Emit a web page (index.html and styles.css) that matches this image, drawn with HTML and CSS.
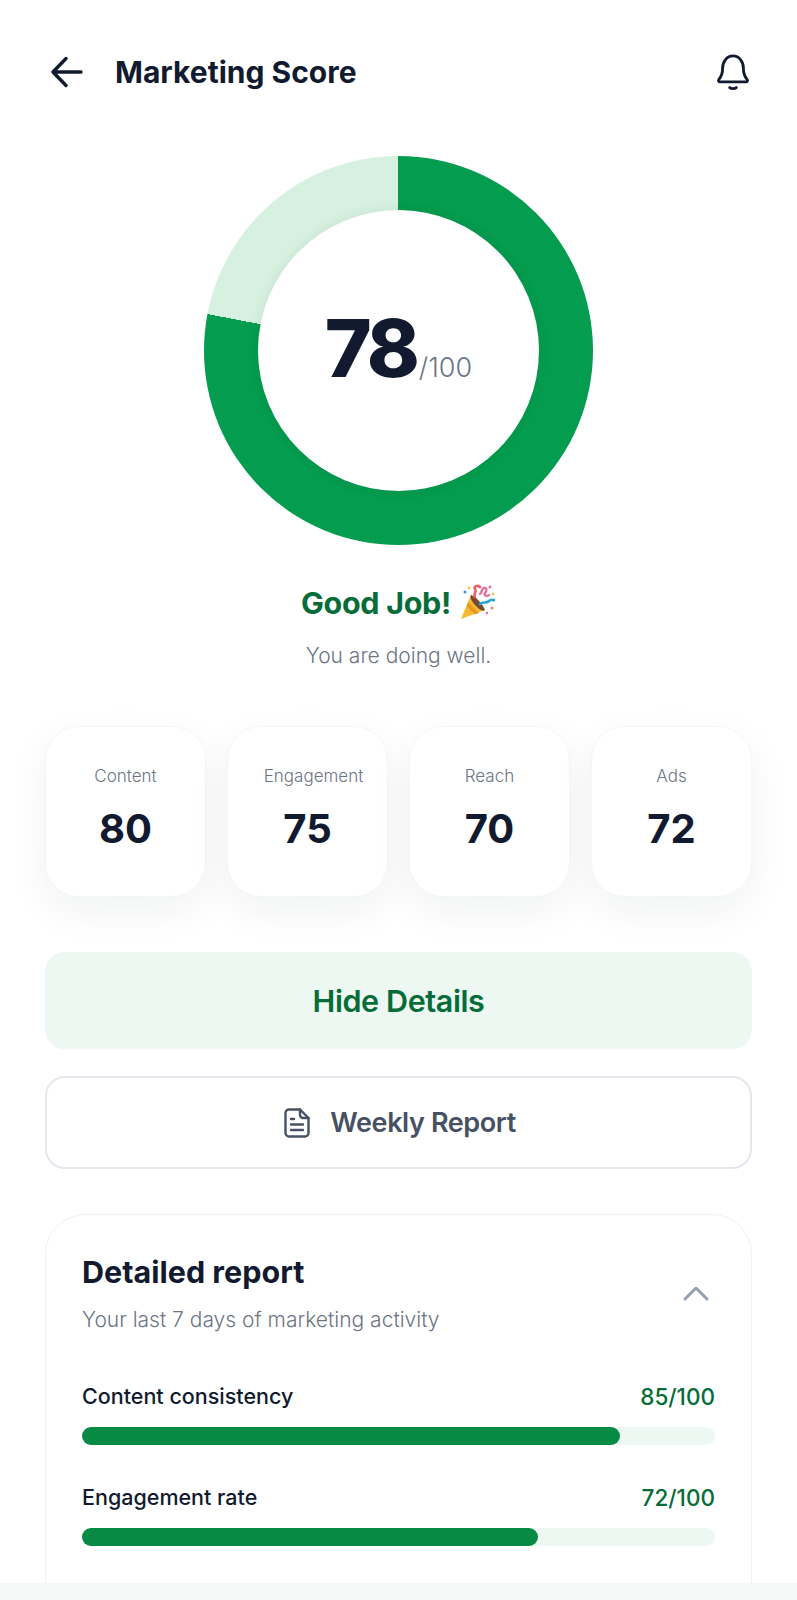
FILE: index.html
```html
<!DOCTYPE html>
<html lang="en">
<head>
    <meta charset="UTF-8">
    <meta name="viewport" content="width=device-width, initial-scale=1.0">
    <title>Marketing Score</title>
    <link rel="stylesheet" href="styles.css">
</head>
<body>
    <main class="screen">
        <header class="top-bar">
            <svg class="back-icon" viewBox="0 0 32 32" fill="none" stroke="#111a2e" stroke-width="3.400" stroke-linecap="round" stroke-linejoin="round">
                <path d="M30 16H2M15 2.500 2 16l13 13.500"/>
            </svg>
            <h1>Marketing Score</h1>
            <svg class="bell-icon" viewBox="0 0 36 40" fill="none" stroke="#111a2e" stroke-width="3" stroke-linecap="round" stroke-linejoin="round">
                <path d="M7 16c0-7 4.500-13 11-13s11 6 11 13c0 6 1.500 9 4 12 .8 1 .2 2.500-1.200 2.500H4.200C2.800 30.500 2.200 29 3 28c2.500-3 4-6 4-12z"/>
                <path d="M14.500 36.500c1.800 1.500 5.200 1.500 7 0"/>
            </svg>
        </header>

        <section class="score-ring">
            <div class="score-inner">
                <span class="score-value">78</span><span class="score-max">/100</span>
            </div>
        </section>

        <h2 class="praise">
            Good Job!
            <svg class="popper" viewBox="0 0 36 36">
                <path d="M11 11 1 35l24-9z" fill="#f5b932"/>
                <path d="M8 18l11 11-4 1.500L6.500 22z" fill="#e39a1f"/>
                <path d="M11 11c4 1 12 9 14 15-3 2-6-1-9-4s-7-8-5-11z" fill="#7a4a2c"/>
                <path d="M15 13c-2-3 2-5 0-8s3-4 5-2" fill="none" stroke="#ef5d6c" stroke-width="2.600" stroke-linecap="round"/>
                <path d="M20 10c3-3 1-5 4-6s3 3 1 5 2 4 4 2" fill="none" stroke="#e2719f" stroke-width="2.400" stroke-linecap="round"/>
                <path d="M20 20c3-3 6 0 9-3s4 0 5-1" fill="none" stroke="#2aa5dc" stroke-width="2.600" stroke-linecap="round"/>
                <circle cx="5" cy="8" r="1.500" fill="#4a8fd8"/>
                <circle cx="9" cy="4" r="1.300" fill="#f5b932"/>
                <circle cx="30" cy="3" r="1.500" fill="#e2719f"/>
                <circle cx="32" cy="24" r="1.500" fill="#ef8a5c"/>
                <circle cx="27" cy="29" r="1.300" fill="#e2719f"/>
                <circle cx="33" cy="10" r="1.300" fill="#f5b932"/>
            </svg>
        </h2>
        <p class="praise-sub">You are doing well.</p>

        <section class="stat-row">
            <div class="stat-card">
                <div class="stat-label">Content</div>
                <div class="stat-value">80</div>
            </div>
            <div class="stat-card">
                <div class="stat-label stat-label-long">Engagement</div>
                <div class="stat-value">75</div>
            </div>
            <div class="stat-card">
                <div class="stat-label">Reach</div>
                <div class="stat-value">70</div>
            </div>
            <div class="stat-card">
                <div class="stat-label">Ads</div>
                <div class="stat-value">72</div>
            </div>
        </section>

        <button class="btn btn-green">Hide Details</button>
        <button class="btn btn-outline">
            <svg class="doc-icon" viewBox="0 0 26 30" fill="none" stroke="#465164" stroke-width="2.400" stroke-linecap="round" stroke-linejoin="round">
                <path d="M16 1.500H5A3.500 3.500 0 0 0 1.500 5v20A3.500 3.500 0 0 0 5 28.500h16a3.500 3.500 0 0 0 3.500-3.500V10z"/>
                <path d="M16 1.500V7a3 3 0 0 0 3 3h5.500"/>
                <path d="M7 11h3M7 16.500h12M7 22h12"/>
            </svg>
            Weekly Report
        </button>

        <section class="report-card">
            <div class="report-head">
                <div>
                    <h3>Detailed report</h3>
                    <p>Your last 7 days of marketing activity</p>
                </div>
                <svg class="chevron" viewBox="0 0 26 16" fill="none" stroke="#94a0b1" stroke-width="3" stroke-linecap="round" stroke-linejoin="round">
                    <path d="M2 14 13 3l11 11"/>
                </svg>
            </div>

            <div class="metric">
                <div class="metric-top">
                    <span>Content consistency</span>
                    <span class="metric-num">85/100</span>
                </div>
                <div class="track"><div class="fill" style="width: 85%"></div></div>
            </div>
            <div class="metric">
                <div class="metric-top">
                    <span>Engagement rate</span>
                    <span class="metric-num">72/100</span>
                </div>
                <div class="track"><div class="fill" style="width: 72%"></div></div>
            </div>
        </section>
    </main>
    <div class="bottom-strip"></div>
</body>
</html>
```

FILE: styles.css
```css
* {
    box-sizing: border-box;
}

html, body {
    height: 100%;
}

body {
    font-family: 'Inter', 'Liberation Sans', sans-serif;
    background-color: white;
    color: #111a2e;
    margin: 0;
    display: flex;
    flex-direction: column;
    height: 100vh;
    overflow: hidden;
}

.screen {
    flex: 1;
    min-height: 0;
    overflow: hidden;
    padding: 0 45px;
}

.bottom-strip {
    height: 17px;
    background-color: #f7f8f8;
}

.top-bar {
    display: flex;
    align-items: center;
    height: 44px;
    margin-top: 50px;
    padding-left: 6px;
}

.back-icon {
    width: 32px;
    height: 32px;
}

h1 {
    flex: 1;
    margin: 0 0 0 32px;
    font-size: 30px;
    font-weight: 700;
}

.bell-icon {
    width: 34px;
    height: 38px;
    margin-right: 2px;
}

.score-ring {
    width: 389px;
    height: 389px;
    margin: 62px auto 0;
    border-radius: 50%;
    background: conic-gradient(#049c4e 0 78%, #d7f1e0 78% 100%);
    display: flex;
    align-items: center;
    justify-content: center;
}

.score-inner {
    width: 281px;
    height: 281px;
    border-radius: 50%;
    background-color: white;
    box-shadow: 0 0 12px rgba(0, 0, 0, 0.08);
    display: flex;
    align-items: baseline;
    justify-content: center;
    padding-top: 98px;
    line-height: 1;
}

.score-value {
    font-size: 80px;
    font-weight: 800;
    letter-spacing: -4px;
}

.score-max {
    font-size: 27px;
    font-weight: 300;
    color: #6b7585;
    margin-left: 3px;
}

.praise {
    display: flex;
    align-items: center;
    justify-content: center;
    gap: 9px;
    margin: 37px 0 0;
    height: 40px;
    font-size: 30.500px;
    font-weight: 700;
    letter-spacing: -0.3px;
    color: #066c38;
}

.popper {
    width: 36px;
    height: 36px;
}

.praise-sub {
    margin: 21px 0 0;
    text-align: center;
    font-size: 21px;
    font-weight: 300;
    color: #6b7585;
}

.stat-row {
    display: grid;
    grid-template-columns: repeat(4, 1fr);
    gap: 21px;
    margin-top: 58px;
}

.stat-card {
    height: 171px;
    padding-top: 39px;
    background-color: white;
    border: 1px solid #f5f6f8;
    border-radius: 34px;
    box-shadow: 0 14px 40px rgba(17, 26, 46, 0.06);
    text-align: center;
}

.stat-label {
    font-size: 17px;
    font-weight: 300;
    color: #6b7585;
}

/* the long label sits a little right of centre */
.stat-label-long {
    padding-left: 12px;
}

.stat-value {
    margin-top: 18px;
    font-size: 40px;
    font-weight: 700;
}

.btn {
    display: flex;
    align-items: center;
    justify-content: center;
    width: 100%;
    font-family: inherit;
    font-weight: 600;
    border-radius: 20px;
}

.btn-green {
    height: 97px;
    margin-top: 55px;
    font-size: 30.500px;
    letter-spacing: -0.4px;
    color: #066c38;
    background-color: #ecf8f1;
    border: none;
}

.btn-outline {
    gap: 20px;
    height: 93px;
    margin-top: 27px;
    padding-left: 9px;
    font-size: 27px;
    letter-spacing: -0.4px;
    color: #465164;
    background-color: white;
    border: 2px solid #e4e8ee;
}

.doc-icon {
    width: 26px;
    height: 30px;
}

.report-card {
    margin-top: 45px;
    height: 420px;
    padding: 38px 36px 0;
    background-color: white;
    border: 1px solid #f0f1f4;
    border-radius: 40px;
}

.report-head {
    display: flex;
    align-items: center;
    justify-content: space-between;
    padding-right: 6px;
    margin-bottom: 51px;
}

h3 {
    margin: 0;
    font-size: 30.500px;
    font-weight: 700;
}

.report-head p {
    margin: 17px 0 0;
    font-size: 21px;
    font-weight: 300;
    color: #6b7585;
}

.chevron {
    width: 26px;
    height: 16px;
}

.metric {
    margin-bottom: 39px;
}

.metric-top {
    display: flex;
    align-items: center;
    justify-content: space-between;
    height: 26px;
    font-size: 21.500px;
    font-weight: 500;
    margin-bottom: 18px;
}

.metric-num {
    font-size: 22.500px;
    color: #066c38;
}

.track {
    height: 18px;
    background-color: #ecf8f1;
    border-radius: 9px;
}

.fill {
    height: 100%;
    background-color: #068a44;
    border-radius: 9px;
}
```
